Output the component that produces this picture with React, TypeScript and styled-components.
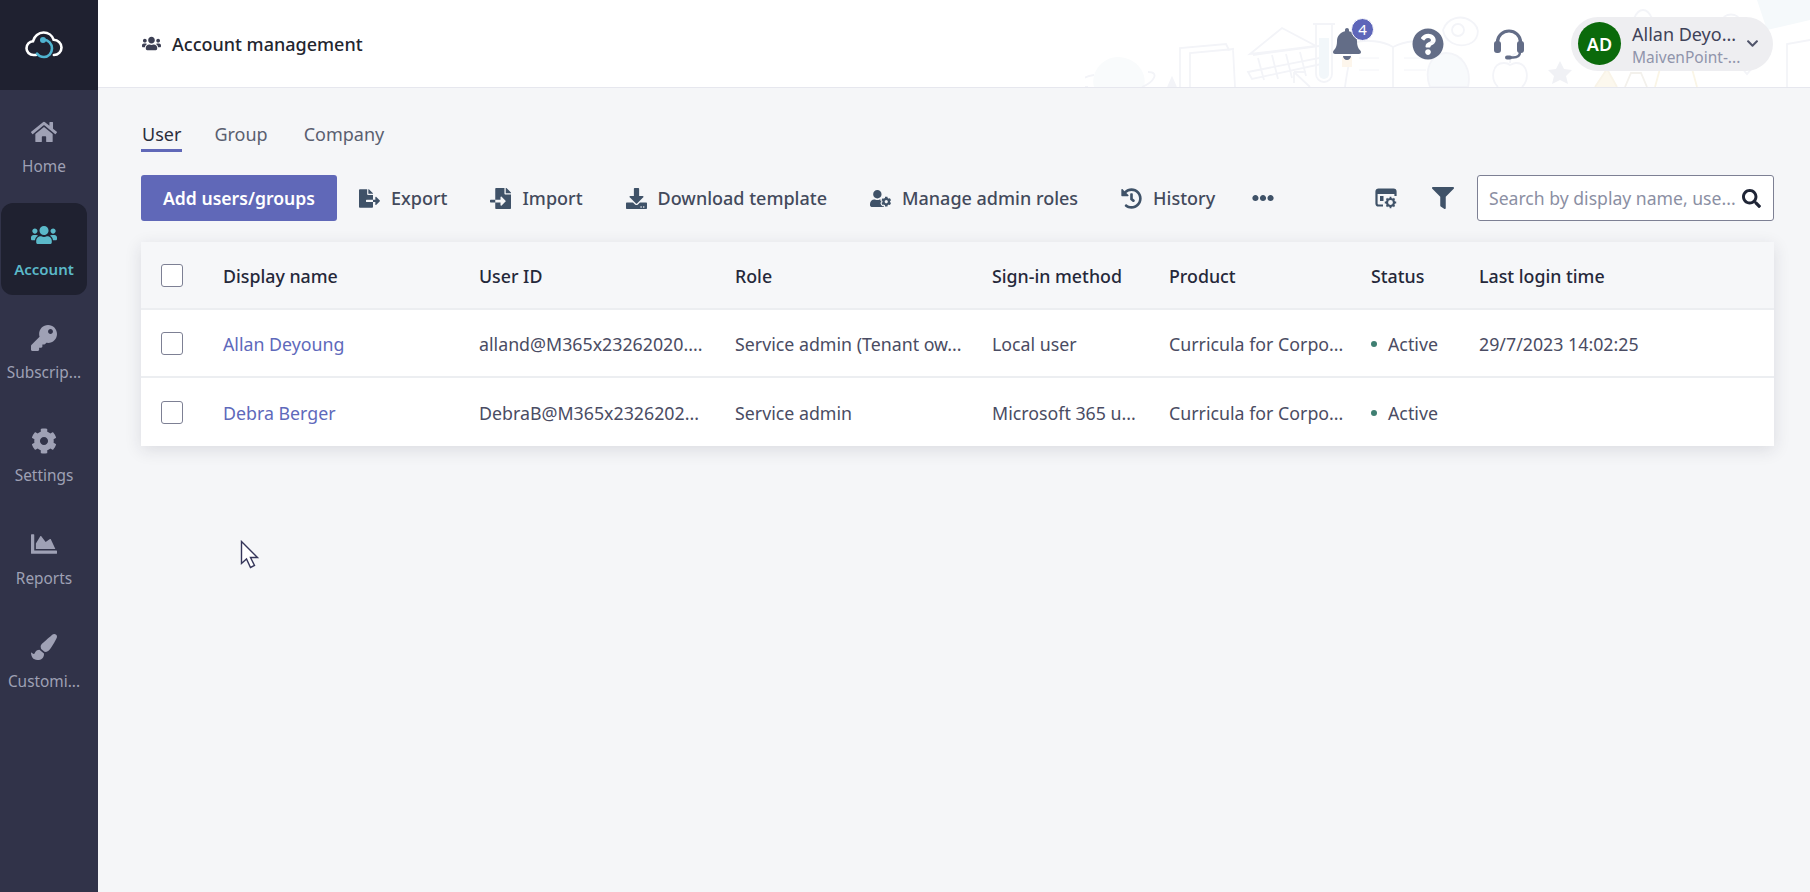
import React from "react";
import styled, { createGlobalStyle } from "styled-components";
import {
  FaBell,
  FaChartArea,
  FaChevronDown,
  FaCog,
  FaDownload,
  FaEllipsisH,
  FaFileExport,
  FaFileImport,
  FaFilter,
  FaHistory,
  FaHome,
  FaKey,
  FaPaintBrush,
  FaQuestionCircle,
  FaSearch,
  FaUserCog,
  FaUsers,
} from "react-icons/fa";

const GlobalStyle = createGlobalStyle`
  html, body {
    margin: 0;
    padding: 0;
    height: 100%;
    overflow: hidden;
    background: #f5f6f8;
    font-family: "Noto Sans", "Open Sans", sans-serif;
  }
  * { box-sizing: border-box; }
`;

const Page = styled.div`
  display: flex;
  width: 1810px;
  height: 892px;
  position: relative;
`;

const Sidebar = styled.nav`
  width: 98px;
  flex: none;
  background: #313349;
  display: flex;
  flex-direction: column;
`;

const LogoBar = styled.div`
  height: 90px;
  background: #1f2130;
  display: flex;
  align-items: center;
  justify-content: center;
  padding-right: 10px;
  margin-bottom: 10px;
`;

const NavList = styled.div`
  display: flex;
  flex-direction: column;
  gap: 11px;
  padding-left: 1px;
`;

const NavItem = styled.a<{ $active?: boolean }>`
  width: 86px;
  height: 92px;
  border-radius: 12px;
  background: ${(p) => (p.$active ? "#1f2130" : "transparent")};
  color: ${(p) => (p.$active ? "#5bb9c9" : "#9fa1b5")};
  font-size: ${(p) => (p.$active ? 15 : 15.4)}px;
  font-weight: ${(p) => (p.$active ? 600 : 400)};
  display: flex;
  flex-direction: column;
  align-items: center;
  padding-top: 19px;
  gap: 11px;
  white-space: nowrap;
  svg {
    width: 26px;
    height: 26px;
    display: block;
  }
`;

const Main = styled.div`
  flex: 1;
  min-width: 0;
  display: flex;
  flex-direction: column;
`;

const Header = styled.header`
  height: 88px;
  flex: none;
  background: #fff;
  border-bottom: 1px solid #e6e7ee;
  display: flex;
  align-items: center;
  padding: 0 37px 0 44px;
  position: relative;
  overflow: hidden;
`;

const Doodle = styled.svg`
  position: absolute;
  left: 987px;
  top: 0;
  width: 725px;
  height: 87px;
  fill: none;
  stroke: #f3f4f8;
  stroke-width: 1.8;
`;

const PageTitle = styled.div`
  display: flex;
  align-items: center;
  gap: 11px;
  font-size: 18px;
  font-weight: 500;
  color: #23262f;
  position: relative;
  svg {
    width: 19px;
    height: 19px;
    color: #3d4054;
  }
`;

const HeaderRight = styled.div`
  margin-left: auto;
  display: flex;
  align-items: center;
  position: relative;
`;

const HeaderIcon = styled.span<{ $gap: number }>`
  position: relative;
  display: flex;
  margin-right: ${(p) => p.$gap}px;
  color: #636d87;
  svg {
    width: 32px;
    height: 32px;
    display: block;
  }
`;

const Badge = styled.span`
  position: absolute;
  top: -10px;
  left: 20px;
  width: 23px;
  height: 23px;
  border-radius: 50%;
  background: #5e66b9;
  border: 1px solid #fff;
  color: #fff;
  font-size: 15px;
  display: flex;
  align-items: center;
  justify-content: center;
`;

const UserPill = styled.div`
  width: 202px;
  height: 54px;
  border-radius: 27px;
  background: #eeeef1;
  display: flex;
  align-items: center;
  padding: 0 14px 0 7px;
`;

const Avatar = styled.div`
  width: 43px;
  height: 43px;
  border-radius: 50%;
  background: #0b6a0b;
  color: #fff;
  font-size: 18px;
  font-weight: 600;
  display: flex;
  align-items: center;
  justify-content: center;
  flex: none;
`;

const UserText = styled.div`
  margin-left: 11px;
  flex: 1;
  display: flex;
  flex-direction: column;
`;

const UserName = styled.span`
  font-size: 18px;
  line-height: 26px;
  color: #3f4258;
`;

const UserOrg = styled.span`
  font-size: 15.5px;
  line-height: 20px;
  color: #9094ab;
`;

const Chevron = styled(FaChevronDown)`
  width: 13px;
  height: 13px;
  color: #50546a;
`;

const Content = styled.main`
  padding: 33px 36px 0 43px;
`;

const Tabs = styled.div`
  display: flex;
  gap: 34px;
`;

const Tab = styled.a<{ $active?: boolean }>`
  font-size: 18px;
  line-height: 26px;
  padding: 0 1px 2px;
  color: ${(p) => (p.$active ? "#2b2e3c" : "#5a5f70")};
  border-bottom: 3px solid ${(p) => (p.$active ? "#6068b8" : "transparent")};
  &:first-child {
    margin-right: -3px;
  }
`;

const Toolbar = styled.div`
  margin-top: 23px;
  height: 46px;
  display: flex;
  align-items: center;
  gap: 43px;
`;

const PrimaryButton = styled.button`
  width: 196px;
  height: 46px;
  margin-right: -21px;
  border: none;
  border-radius: 3px;
  background: #6068b8;
  color: #fff;
  font-family: inherit;
  font-size: 17.6px;
  font-weight: 600;
`;

const ToolAction = styled.a`
  display: flex;
  align-items: center;
  gap: 11px;
  color: #434a5c;
  font-size: 18px;
  font-weight: 500;
  white-space: nowrap;
  svg {
    width: 21px;
    height: 21px;
    color: #3f5268;
    flex: none;
  }
`;

const ToolIcon = styled.span`
  display: flex;
  color: #3f5268;
  svg {
    width: 22px;
    height: 22px;
    display: block;
  }
`;

const MoreIcon = styled(ToolIcon)`
  margin-left: -6px;
`;

const ToolbarRight = styled.div`
  margin-left: auto;
  display: flex;
  align-items: center;
  gap: 35px;
`;

const SearchBox = styled.div`
  width: 297px;
  height: 46px;
  margin-left: -12px;
  background: #fff;
  border: 1px solid #7d8094;
  border-radius: 3px;
  display: flex;
  align-items: center;
  padding: 0 12px 0 11px;
  font-size: 17.6px;
  color: #8b8fa3;
  justify-content: space-between;
  svg {
    width: 19px;
    height: 19px;
    color: #1f2536;
  }
`;

const Table = styled.section`
  margin-top: 21px;
  background: #fff;
  box-shadow: 0 4px 16px rgba(30, 35, 60, 0.12);
`;

const Row = styled.div<{ $head?: boolean }>`
  display: grid;
  grid-template-columns: 82px 256px 256px 257px 177px 202px 108px 1fr;
  align-items: center;
  height: 68px;
  padding-top: 1px;
  background: ${(p) => (p.$head ? "#f6f7f9" : "#fff")};
  border-bottom: 2px solid #eceef1;
  color: ${(p) => (p.$head ? "#25283a" : "#4a4c63")};
  font-size: 17.8px;
  font-weight: ${(p) => (p.$head ? 500 : 400)};
  &:last-child {
    border-bottom: none;
  }
`;

const CheckCell = styled.div`
  padding-left: 20px;
  display: flex;
`;

const Checkbox = styled.span`
  width: 22px;
  height: 23px;
  border: 1px solid #7d8094;
  border-radius: 3px;
  background: #fff;
`;

const Cell = styled.div`
  white-space: nowrap;
`;

const LinkCell = styled(Cell)`
  color: #5e69bb;
`;

const StatusCell = styled(Cell)`
  display: flex;
  align-items: center;
  gap: 11px;
  &::before {
    content: "";
    width: 6px;
    height: 6px;
    border-radius: 50%;
    background: #3f7f72;
  }
`;

const Cursor = styled.svg`
  position: absolute;
  left: 240px;
  top: 540px;
  width: 20px;
  height: 29px;
`;

const navItems = [
  { label: "Home", icon: <FaHome /> },
  { label: "Account", icon: <FaUsers />, active: true },
  { label: "Subscrip...", icon: <FaKey /> },
  { label: "Settings", icon: <FaCog /> },
  { label: "Reports", icon: <FaChartArea /> },
  { label: "Customi...", icon: <FaPaintBrush /> },
];

const actions = [
  { label: "Export", icon: <FaFileExport /> },
  { label: "Import", icon: <FaFileImport /> },
  { label: "Download template", icon: <FaDownload /> },
  { label: "Manage admin roles", icon: <FaUserCog /> },
  { label: "History", icon: <FaHistory /> },
];

const users = [
  {
    name: "Allan Deyoung",
    id: "alland@M365x23262020....",
    role: "Service admin (Tenant ow...",
    method: "Local user",
    product: "Curricula for Corpo...",
    login: "29/7/2023 14:02:25",
  },
  {
    name: "Debra Berger",
    id: "DebraB@M365x2326202...",
    role: "Service admin",
    method: "Microsoft 365 u...",
    product: "Curricula for Corpo...",
    login: "",
  },
];

const Logo = () => (
  <svg width="38" height="28" viewBox="0 0 38 28" fill="none" strokeLinecap="round">
    <path
      d="M11 24H8.5C4.4 24 1.5 21 1.5 17.2 1.5 13.4 4.4 10.4 8 10.2 9.2 5 13.6 1.5 18.6 1.5c4.6 0 8.6 3 10 7.2 4.4.2 7.9 3.6 7.9 7.8 0 4.2-3.4 7.5-7.6 7.5"
      stroke="#fff"
      strokeWidth="2.6"
    />
    <path d="M18.5 8.5c5 .5 8.5 4.400 8.500 9 0 4.800-3.700 8.500-8 8.500-3 0-5.500-1.300-7-3.500" stroke="#4fb3d0" strokeWidth="2.600" />
    <circle cx="18" cy="9" r="3" fill="#4fb3d0" />
  </svg>
);

const HeadsetIcon = () => (
  <svg viewBox="0 0 32 32" fill="none">
    <path d="M4.500 17v-3C4.500 7.500 10 3 16 3s11.500 4.500 11.500 11v3" stroke="currentColor" strokeWidth="3.200" />
    <rect x="1" y="13" width="7" height="12" rx="3" fill="currentColor" />
    <rect x="24" y="13" width="7" height="12" rx="3" fill="currentColor" />
    <path d="M27 24c0 4-3 5.500-7 5.500h-5" stroke="currentColor" strokeWidth="2.400" />
    <rect x="12" y="27.500" width="7" height="4" rx="2" fill="currentColor" />
  </svg>
);

const ColumnSettingsIcon = () => (
  <svg viewBox="0 0 22 22" fill="none">
    <path d="M8 18.500H3.500a2 2 0 0 1-2-2V4.500a2 2 0 0 1 2-2h15a2 2 0 0 1 2 2V9" stroke="currentColor" strokeWidth="2.200" />
    <path d="M2 3h18v4H2z" fill="currentColor" />
    <rect x="5" y="9" width="3.500" height="5" fill="currentColor" />
    <circle cx="15.500" cy="15.500" r="3.500" stroke="currentColor" strokeWidth="2.200" />
    <path d="M15.500 9.800v2M15.500 19.200v2M9.800 15.500h2M19.200 15.500h2M11.500 11.500l1.300 1.300M18.200 18.200l1.300 1.300M11.500 19.500l1.300-1.300M18.200 12.800l1.300-1.300" stroke="currentColor" strokeWidth="1.800" />
  </svg>
);

const HeaderDoodle = () => (
  <Doodle viewBox="0 0 725 87">
    {/* planet, books, bank, tube */}
    <g transform="translate(-27 0)">
      <path d="M36 87c-4-14 8-30 24-30s30 14 26 30z" fill="#f9fbfc" stroke="none" />
      <path d="M36 75c-14 2-22 12-6 12M90 72c12 0 6 10-6 15" />
      <path d="M110 87l4-9 4 9" fill="#f3f4f8" />
    </g>
    <g transform="translate(-32 0)">
      <path d="M127 87V48l46-4 3 6 4-1 2 38M137 87V53l44-4" />
    </g>
    <g transform="translate(-35 0)">
      <path d="M200 54l32-26 34 18zM203 55l66-9M208 58l6 22M222 55l6 24M236 54l6 24M250 52l6 24M198 72l76-15 2 6-74 16z" />
      <path d="M260 87l-16-15M244 72h12M244 72v11" />
    </g>
    <g transform="translate(-46 0)">
      <path d="M274 24h22M277 24v50a8 8 0 0 0 16 0V24" />
      <path d="M280 38h10v36a5 5 0 0 1-10 0z" fill="#f2f7fa" stroke="none" />
      <path d="M306 87c2-16 6-34 8-44 14-4 30-2 40 4 12-6 28-8 42-4l6 44" />
      <path d="M354 47v40" />
      <path d="M320 58h20M320 70h20M365 58h22M365 70h22" strokeWidth="1" />
      <rect x="303" y="57" width="10" height="10" fill="#fdf6ec" stroke="none" />
    </g>
    {/* eye, globe, apple, star */}
    <g transform="translate(-67 0)">
      <path d="M425 30c4-12 18-16 28-9 12 8 6 20-2 23-12 4-24-2-26-14z" />
      <circle cx="440" cy="30" r="6" />
      <path d="M412 87c-6-16 0-34 16-34s26 16 22 34z" fill="#f8fafc" />
    </g>
    <g transform="translate(-61 0)">
      <path d="M474 87c-8-8-6-24 6-24 3 0 5 1 6 2 2-1 4-2 6-2 12 0 14 16 6 24M486 63c0-5 2-8 6-10" />
    </g>
    <path d="M475 61l4 8 8 1-6 6 2 8-8-4-8 4 2-8-6-6 8-1z" fill="#f0f1f5" stroke="none" />
    {/* atom, triangle, arch, question mark, heart */}
    <g transform="translate(-32 0)">
      <ellipse cx="590" cy="40" rx="30" ry="13" transform="rotate(35 590 40)" />
      <ellipse cx="590" cy="40" rx="30" ry="13" transform="rotate(-35 590 40)" />
      <ellipse cx="590" cy="40" rx="13" ry="30" />
    </g>
    <path d="M510 87l12-18 10 18" fill="#fcf8ee" stroke="#f9f4e8" />
    <path d="M540 87l6-14h10l6 14" stroke="#f3f1ec" />
    <path d="M570 87l6-22h30l6 22M580 65c0-8 4-12 10-12s10 4 10 12" stroke="#faf5e6" />
    <path d="M636 22c2-10 18-10 20 0 1 8-10 8-10 16" />
    <path d="M650 60c-8-8 2-20 12-10 10-10 20 2 12 10l-12 14z" />
    <path d="M672 0h53v20l-43 10z" fill="#f5f9fb" stroke="none" />
    <path d="M702 87V44l23-4" />
  </Doodle>
);

export default function App() {
  return (
    <Page>
      <GlobalStyle />
      <Sidebar>
        <LogoBar>
          <Logo />
        </LogoBar>
        <NavList>
          {navItems.map((item) => (
            <NavItem key={item.label} $active={item.active}>
              {item.icon}
              {item.label}
            </NavItem>
          ))}
        </NavList>
      </Sidebar>
      <Main>
        <Header>
          <HeaderDoodle />
          <PageTitle>
            <FaUsers />
            Account management
          </PageTitle>
          <HeaderRight>
            <HeaderIcon $gap={49}>
              <FaBell />
              <Badge>4</Badge>
            </HeaderIcon>
            <HeaderIcon $gap={49}>
              <FaQuestionCircle />
            </HeaderIcon>
            <HeaderIcon $gap={46}>
              <HeadsetIcon />
            </HeaderIcon>
            <UserPill>
              <Avatar>AD</Avatar>
              <UserText>
                <UserName>Allan Deyo...</UserName>
                <UserOrg>MaivenPoint-...</UserOrg>
              </UserText>
              <Chevron />
            </UserPill>
          </HeaderRight>
        </Header>
        <Content>
          <Tabs>
            <Tab $active>User</Tab>
            <Tab>Group</Tab>
            <Tab>Company</Tab>
          </Tabs>
          <Toolbar>
            <PrimaryButton>Add users/groups</PrimaryButton>
            {actions.map((action) => (
              <ToolAction key={action.label}>
                {action.icon}
                {action.label}
              </ToolAction>
            ))}
            <MoreIcon>
              <FaEllipsisH />
            </MoreIcon>
            <ToolbarRight>
              <ToolIcon>
                <ColumnSettingsIcon />
              </ToolIcon>
              <ToolIcon>
                <FaFilter />
              </ToolIcon>
              <SearchBox>
                Search by display name, use...
                <FaSearch />
              </SearchBox>
            </ToolbarRight>
          </Toolbar>
          <Table>
            <Row $head>
              <CheckCell>
                <Checkbox />
              </CheckCell>
              <Cell>Display name</Cell>
              <Cell>User ID</Cell>
              <Cell>Role</Cell>
              <Cell>Sign-in method</Cell>
              <Cell>Product</Cell>
              <Cell>Status</Cell>
              <Cell>Last login time</Cell>
            </Row>
            {users.map((user) => (
              <Row key={user.name}>
                <CheckCell>
                  <Checkbox />
                </CheckCell>
                <LinkCell>{user.name}</LinkCell>
                <Cell>{user.id}</Cell>
                <Cell>{user.role}</Cell>
                <Cell>{user.method}</Cell>
                <Cell>{user.product}</Cell>
                <StatusCell>Active</StatusCell>
                <Cell>{user.login}</Cell>
              </Row>
            ))}
          </Table>
        </Content>
      </Main>
      <Cursor viewBox="0 0 20 29">
        <path d="M1.500 1.500v22l5-4.500 4 8.500 4-2-4-8h7z" fill="#fff" stroke="#35365a" strokeWidth="1.400" />
      </Cursor>
    </Page>
  );
}
